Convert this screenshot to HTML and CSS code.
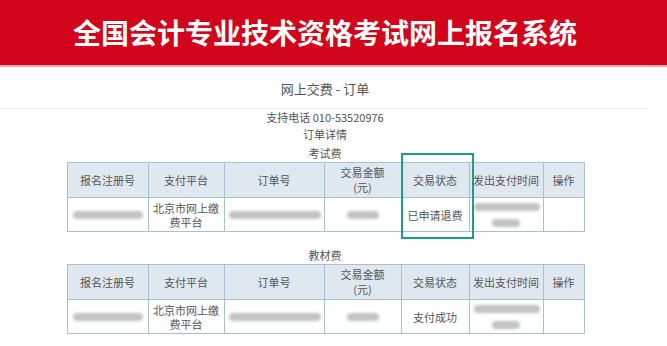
FILE: index.html
```html
<!DOCTYPE html>
<html lang="zh-CN">
<head>
    <meta charset="UTF-8">
    <meta name="viewport" content="width=device-width, initial-scale=1.0">
    <title>网上交费 - 订单</title>
    <link rel="stylesheet" href="styles.css">
</head>
<body>
    <div class="topbar">
        <h1>全国会计专业技术资格考试网上报名系统</h1>
    </div>
    <div class="page">
        <div class="page-title">网上交费 - 订单</div>
        <div class="info">支持电话 010-53520976</div>
        <div class="info">订单详情</div>

        <div class="caption">考试费</div>
        <div class="table-wrap">
            <table class="order-table">
                <colgroup>
                    <col style="width:81px"><col style="width:76px"><col style="width:100px"><col style="width:77px">
                    <col style="width:68px"><col style="width:74px"><col style="width:41px">
                </colgroup>
                <tr>
                    <th>报名注册号</th>
                    <th>支付平台</th>
                    <th>订单号</th>
                    <th>交易金额<br>(元)</th>
                    <th>交易状态</th>
                    <th>发出支付时间</th>
                    <th>操作</th>
                </tr>
                <tr>
                    <td><span class="blur w-reg"></span></td>
                    <td>北京市网上缴费平台</td>
                    <td><span class="blur w-order"></span></td>
                    <td><span class="blur w-money"></span></td>
                    <td>已申请退费</td>
                    <td><span class="blur w-time"></span><span class="blur w-time2"></span></td>
                    <td></td>
                </tr>
            </table>
            <div class="highlight"></div>
        </div>

        <div class="caption second">教材费</div>
        <div class="table-wrap">
            <table class="order-table">
                <colgroup>
                    <col style="width:81px"><col style="width:76px"><col style="width:100px"><col style="width:77px">
                    <col style="width:68px"><col style="width:74px"><col style="width:41px">
                </colgroup>
                <tr>
                    <th>报名注册号</th>
                    <th>支付平台</th>
                    <th>订单号</th>
                    <th>交易金额<br>(元)</th>
                    <th>交易状态</th>
                    <th>发出支付时间</th>
                    <th>操作</th>
                </tr>
                <tr>
                    <td><span class="blur w-reg"></span></td>
                    <td>北京市网上缴费平台</td>
                    <td><span class="blur w-order"></span></td>
                    <td><span class="blur w-money"></span></td>
                    <td>支付成功</td>
                    <td><span class="blur w-time"></span><span class="blur w-time2"></span></td>
                    <td></td>
                </tr>
            </table>
        </div>
    </div>
</body>
</html>
```

FILE: styles.css
```css
* {
    margin: 0;
    padding: 0;
    box-sizing: border-box;
}
body {
    font-family: "Noto Sans CJK SC", "Liberation Sans", sans-serif;
    color: #555;
    background: #fff;
}

.topbar {
    height: 67px;
    background: #d2041c;
    border-bottom: 2px solid #f4a6ae;
    display: flex;
    align-items: center;
}
.topbar h1 {
    width: 650px;
    text-align: center;
    color: #fff;
    font-size: 28px;
    font-weight: 700;
    line-height: 1;
    margin-top: -2px;
}

.page {
    width: 650px;
    text-align: center;
}
.page-title {
    height: 42px;
    line-height: 44px;
    font-size: 13px;
    color: #555;
    border-bottom: 1px solid #f0f0f0;
}
.info {
    font-size: 11px;
    line-height: 17px;
}
.info:first-of-type {
    line-height: 19px;
}
.caption {
    font-size: 11px;
    line-height: 17px;
    margin-top: 2px;
}
.caption.second {
    margin-top: 15px;
}

.table-wrap {
    position: relative;
    width: 517px;
    margin: 0 auto;
}
.order-table {
    width: 517px;
    table-layout: fixed;
    border-collapse: collapse;
    font-size: 11px;
    color: #555;
}
.order-table th,
.order-table td {
    border: 1px solid #a9c0d4;
    padding: 0 2px;
    line-height: 15px;
    font-weight: 400;
    text-align: center;
    vertical-align: middle;
}
.order-table th {
    height: 35px;
    background: #dfe7ef;
    white-space: nowrap;
}
.order-table td {
    height: 34px;
    line-height: 14px;
    padding: 0 4px;
}

.blur {
    display: block;
    margin: 0 auto;
    height: 8px;
    background: #c2c2c2;
    border-radius: 4px;
    filter: blur(1.5px);
}
.w-reg { width: 70px; }
.w-order { width: 92px; }
.w-money { width: 32px; }
.w-time { width: 66px; margin-bottom: 8px; }
.w-time2 { width: 28px; }

.highlight {
    position: absolute;
    left: 334px;
    top: -9px;
    width: 73px;
    height: 86px;
    border: 2px solid #1f9b8d;
}
```
